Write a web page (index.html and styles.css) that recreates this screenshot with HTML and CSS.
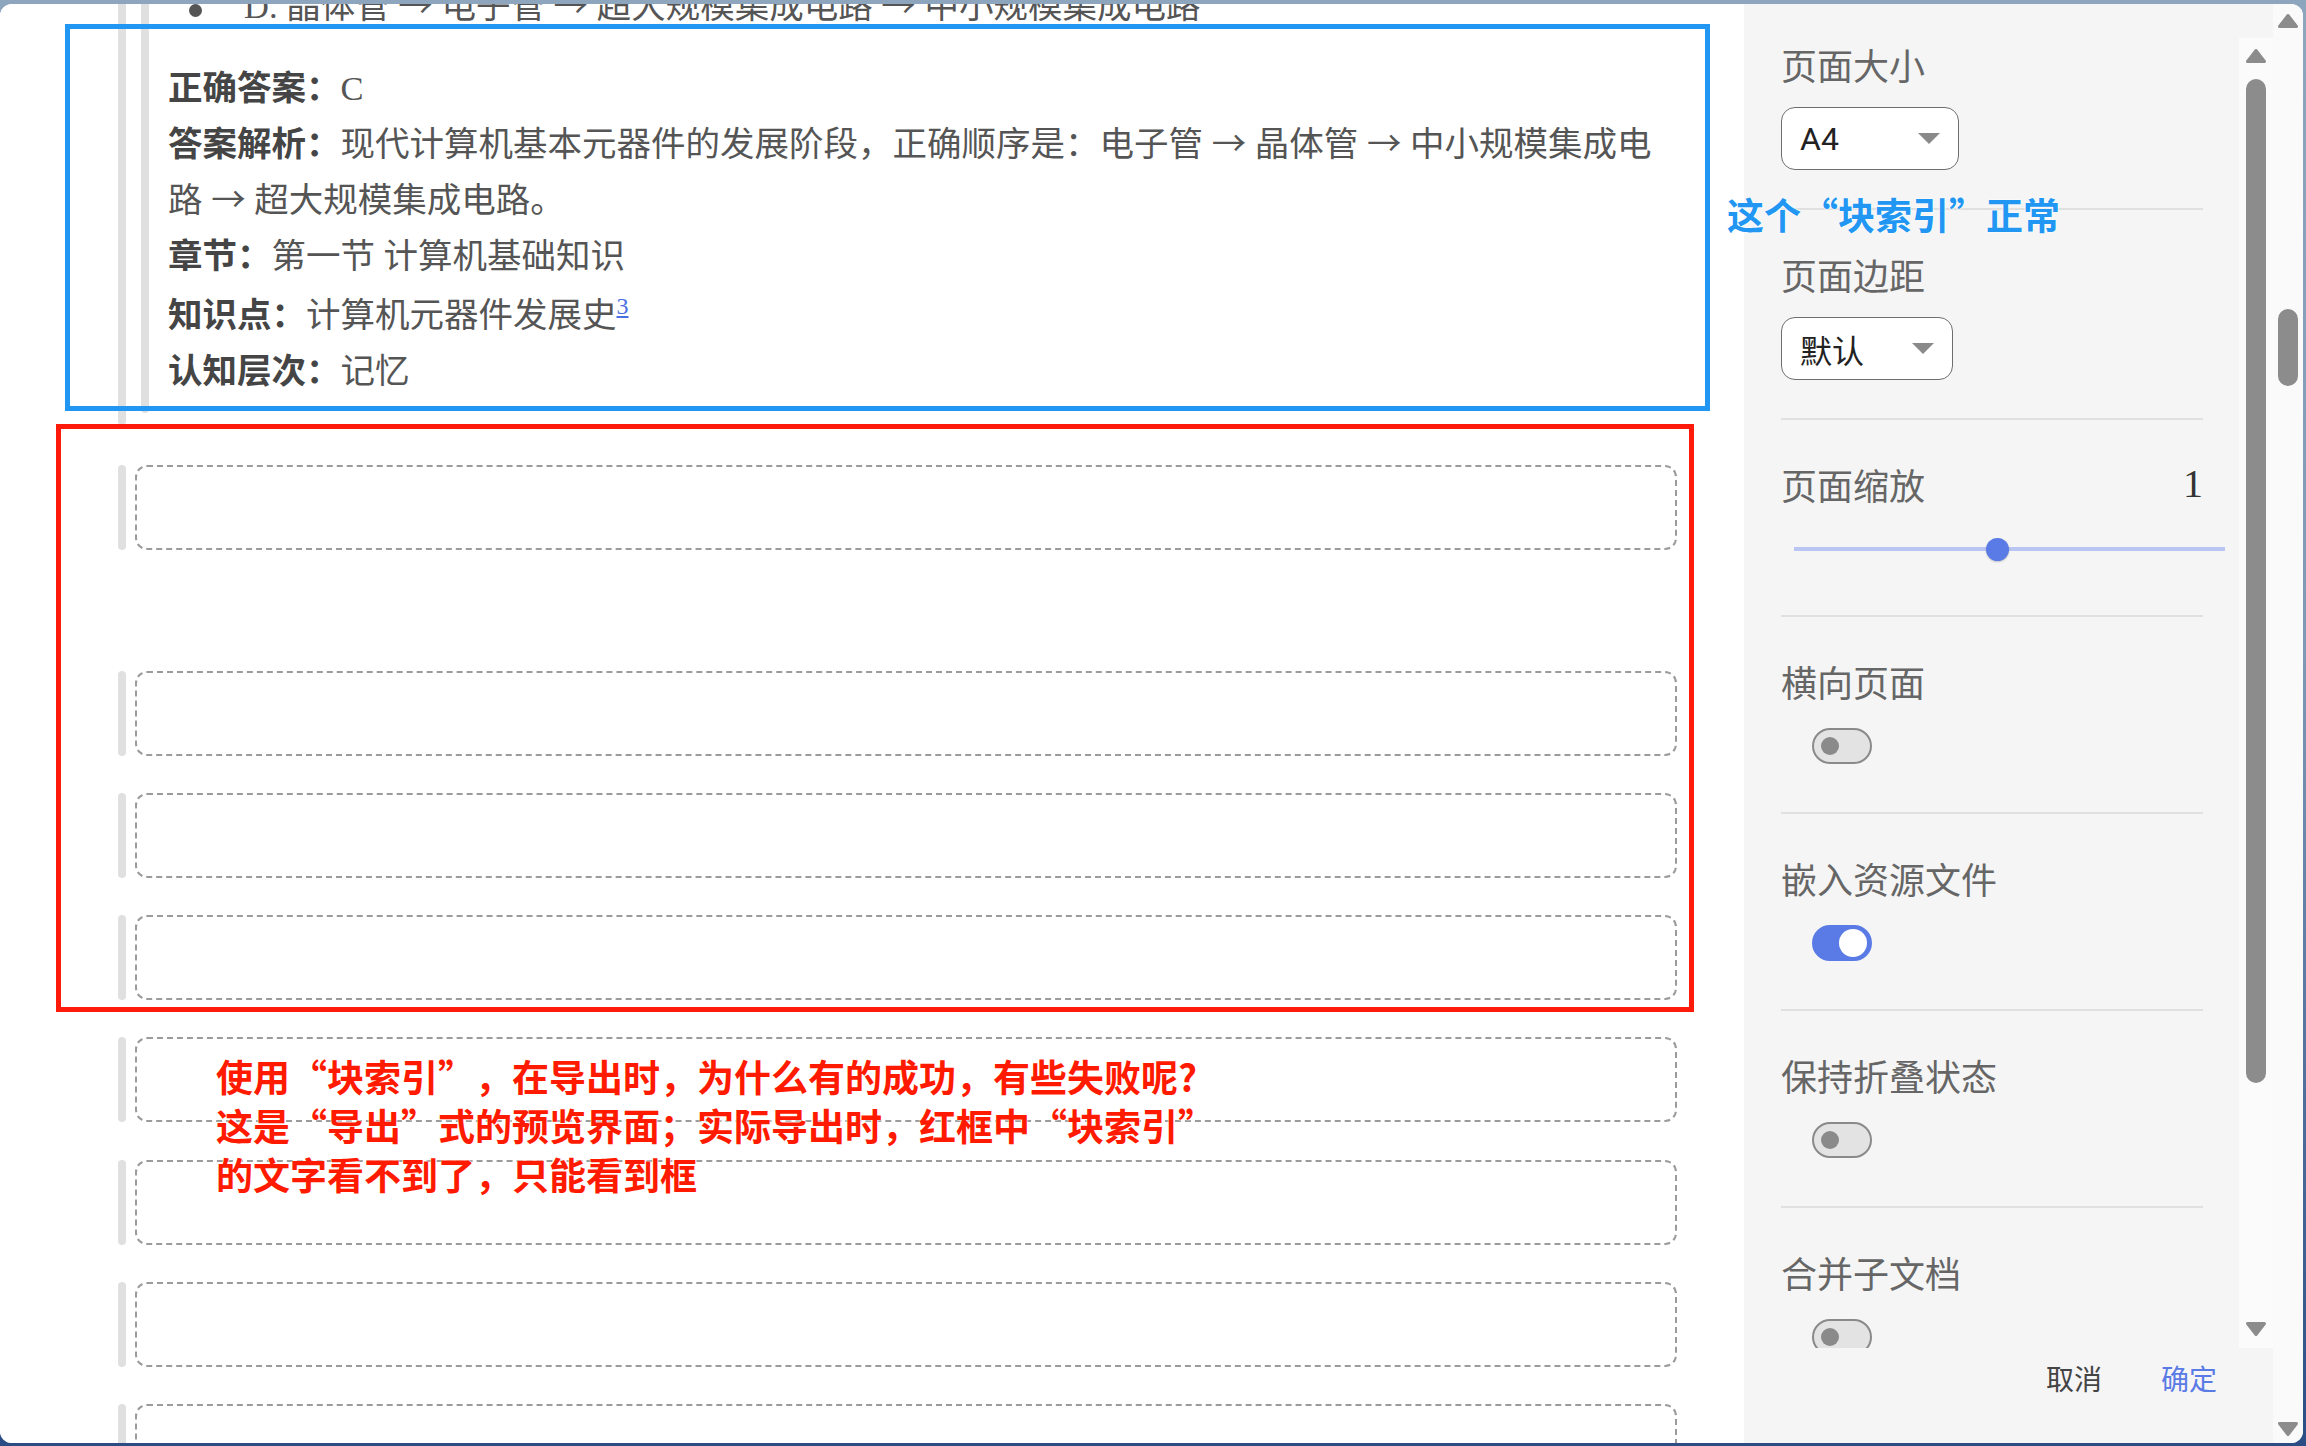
FILE: index.html
```html
<!DOCTYPE html>
<html>
<head>
  <meta charset="UTF-8">
  <meta name="viewport" content="width=device-width, initial-scale=1">
  <title>导出预览</title>
  <link rel="stylesheet" href="styles.css">
</head>
<body>
  <div class="win">
    <div class="doc">
      <div class="pg">
        <div class="qb">
          <div class="bar"></div>
          <div class="qb-in">
            <div class="bar"></div>
            <div class="qb-body">
              <ul class="ol"><li>D. 晶体管 <span class="ar">→</span> 电子管 <span class="ar">→</span> 超大规模集成电路 <span class="ar">→</span> 中小规模集成电路</li></ul>
              <div class="ans">
                <p><b>正确答案：</b>C</p>
                <p><b>答案解析：</b>现代计算机基本元器件的发展阶段，正确顺序是：电子管 <span class="ar">→</span> 晶体管 <span class="ar">→</span> 中小规模集成电路 <span class="ar">→</span> 超大规模集成电路。</p>
                <p><b>章节：</b>第一节 计算机基础知识</p>
                <p><b>知识点：</b>计算机元器件发展史<sup><a href="#fn3">3</a></sup></p>
                <p><b>认知层次：</b>记忆</p>
              </div>
            </div>
          </div>
        </div>
        <div class="blk first"><div class="bar"></div><div class="box"></div></div>
        <div class="blk"><div class="bar"></div><div class="box"></div></div>
        <div class="blk"><div class="bar"></div><div class="box"></div></div>
        <div class="blk"><div class="bar"></div><div class="box"></div></div>
        <div class="blk"><div class="bar"></div><div class="box"></div></div>
        <div class="blk"><div class="bar"></div><div class="box"></div></div>
        <div class="blk"><div class="bar"></div><div class="box"></div></div>
        <div class="blk"><div class="bar"></div><div class="box"></div></div>
      </div>
    </div>

    <div class="side">
      <div class="side-main">
        <div class="opts">
          <div class="opt sel">
            <div class="lbl">页面大小</div>
            <div class="select w-a4"><span>A4</span><i class="caret"></i></div>
          </div>
          <div class="opt sel">
            <div class="lbl">页面边距</div>
            <div class="select w-def"><span>默认</span><i class="caret"></i></div>
          </div>
          <div class="opt zoom">
            <div class="lbl row"><span>页面缩放</span><span class="val">1</span></div>
            <div class="slider">
              <div class="track"></div>
              <div class="thumb" style="left:192px"></div>
            </div>
          </div>
          <div class="opt">
            <div class="lbl">横向页面</div>
            <div class="tg"></div>
          </div>
          <div class="opt">
            <div class="lbl">嵌入资源文件</div>
            <div class="tg on"></div>
          </div>
          <div class="opt">
            <div class="lbl">保持折叠状态</div>
            <div class="tg"></div>
          </div>
          <div class="opt">
            <div class="lbl">合并子文档</div>
            <div class="tg"></div>
          </div>
        </div>
        <div class="ibar">
          <svg width="22" height="16" viewBox="0 0 22 16"><path d="M11 2.5L19.5 13.5H2.5Z" fill="#8c8c8c" stroke="#8c8c8c" stroke-width="3" stroke-linejoin="round"/></svg>
          <div class="ithumb"></div>
          <svg class="dn" width="22" height="16" viewBox="0 0 22 16"><path d="M2.5 2.5H19.5L11 13.5Z" fill="#8c8c8c" stroke="#8c8c8c" stroke-width="3" stroke-linejoin="round"/></svg>
        </div>
      </div>
      <div class="foot">
        <span>取消</span>
        <span class="ok">确定</span>
      </div>
    </div>

    <div class="obar">
      <svg width="22" height="16" viewBox="0 0 22 16"><path d="M11 2.5L19.5 13.5H2.5Z" fill="#8c8c8c" stroke="#8c8c8c" stroke-width="3" stroke-linejoin="round"/></svg>
      <div class="othumb"></div>
      <svg class="dn" width="22" height="16" viewBox="0 0 22 16"><path d="M2.5 2.5H19.5L11 13.5Z" fill="#8c8c8c" stroke="#8c8c8c" stroke-width="3" stroke-linejoin="round"/></svg>
    </div>
  </div>

  <!-- annotations drawn over the screenshot -->
  <div class="mark mark-blue"></div>
  <div class="mark mark-red"></div>
  <div class="note note-blue">这个“块索引”正常</div>
  <div class="note note-red">使用“块索引”，在导出时，为什么有的成功，有些失败呢?<br>这是“导出”式的预览界面；实际导出时，红框中“块索引”<br>的文字看不到了，只能看到框</div>
</body>
</html>
```

FILE: styles.css
```css
html,body{margin:0;}
body{width:2306px;height:1446px;overflow:hidden;position:relative;background:linear-gradient(#8ea5be 0,#7f99b6 45%,#2b4d84 100%);font-family:"Noto Sans CJK SC",sans-serif;text-spacing-trim:space-all;}
.win{margin-top:4px;width:2303px;height:1439px;border-radius:12px;overflow:hidden;display:flex;background:#fff;}

/* document preview */
.doc{width:1744px;flex:none;overflow:hidden;background:#fff;font-family:"Liberation Serif","Noto Sans CJK SC",serif;font-size:34.5px;line-height:56px;color:#555;}
.pg{margin-top:-26px;padding:0 67px 0 118px;}
.bar{width:8px;flex:none;background:#e0e0e0;border-radius:4px;}
.qb{display:flex;}
.qb-in{display:flex;flex:1;margin-left:15px;margin-bottom:12px;}
.qb-body{flex:1;margin:0 7px 0 19px;padding-bottom:14px;}
.ar{font-family:"Noto Sans CJK SC",sans-serif;line-height:1;}
.ol{list-style:none;margin:0;padding:0;}
.ol li::before{content:"";display:inline-block;width:13px;height:13px;border-radius:50%;background:#555;margin:0 42px 0 21px;vertical-align:middle;}
.ans{margin-top:26px;}
.ans p{margin:0;}
.ans b{color:#454545;}
.ans sup{font-size:24px;line-height:44px;}
.ans sup a{color:#4a6fe3;}
.blk{display:flex;gap:9px;margin-top:37.3px;}
.blk.first{margin-top:40px;margin-bottom:121px;}
.box{flex:1;height:85px;box-sizing:border-box;border:2px dashed #9b9b9b;border-radius:12px;}

/* export settings */
.side{width:529px;flex:none;background:#f5f5f5;display:flex;flex-direction:column;padding-top:34px;box-sizing:border-box;}
.side-main{display:flex;height:1310px;flex:none;}
.opts{width:495px;box-sizing:border-box;padding:0 36px 0 37px;overflow:hidden;}
.opt{border-bottom:2px solid #e0e0e0;padding:40px 0 48px;}
.opt:first-child{padding-top:2px;}
.opt.sel{padding-bottom:38px;}
.opt.zoom{padding-bottom:51px;}
.lbl{font-size:36px;line-height:48px;color:#666;}
.row{display:flex;justify-content:space-between;}
.val{font-family:"Liberation Serif",serif;font-size:40px;color:#333;}
.select{margin-top:19px;height:63px;box-sizing:border-box;border:1.5px solid #6e6e6e;border-radius:14px;background:#fff;display:flex;align-items:center;justify-content:space-between;padding:0 18px;font-family:Roboto,"Noto Sans CJK SC",sans-serif;font-size:32px;color:#222;}
.w-a4{width:178px;}
.w-def{width:172px;}
.caret{width:0;height:0;border-left:11px solid transparent;border-right:11px solid transparent;border-top:11px solid #8a8a8a;}
.slider{position:relative;height:30px;width:431px;margin:26px 0 0 13px;}
.track{position:absolute;left:0;right:0;top:13px;height:4px;background:#b9c6f3;}
.thumb{position:absolute;top:3.5px;width:23px;height:23px;border-radius:50%;background:#5a7be6;box-shadow:0 1px 2px rgba(0,0,0,.2);}
.tg{margin:23px 0 0 31px;width:60px;height:36px;box-sizing:border-box;border:2px solid #8a8a8a;border-radius:18px;background:#e3e3e3;position:relative;}
.tg::after{content:"";position:absolute;left:7px;top:7px;width:18px;height:18px;border-radius:50%;background:#8a8a8a;}
.tg.on{background:#5a7be6;border-color:#5a7be6;}
.tg.on::after{left:auto;right:3px;top:2px;width:28px;height:28px;background:#fff;}
.ibar{width:34px;flex:none;background:#fbfbfb;display:flex;flex-direction:column;align-items:center;padding:10px 0 11px;box-sizing:border-box;}
.ithumb{width:20px;height:1004px;margin-top:15px;border-radius:10px;background:#8c8c8c;}
.dn{margin-top:auto;}
.foot{flex:1;display:flex;justify-content:flex-end;gap:59px;padding:10px 56px 0 0;font-size:28px;line-height:40px;color:#444;}
.foot .ok{color:#5a7be6;}
.obar{width:30px;flex:none;background:#fafafa;display:flex;flex-direction:column;align-items:center;padding:9px 0 6px;box-sizing:border-box;}
.othumb{width:20px;height:77px;margin-top:280px;border-radius:10px;background:#8c8c8c;}

/* annotations */
.mark{position:absolute;box-sizing:border-box;}
.mark-blue{left:65px;top:24px;width:1645px;height:387px;border:5px solid #2196f3;}
.mark-red{left:56px;top:424px;width:1638px;height:588px;border:5px solid #ff1a0a;}
.note{position:absolute;font-family:"Noto Sans CJK SC",sans-serif;font-weight:700;white-space:nowrap;text-shadow:0 0 2px #fff,0 0 2px #fff;}
.note-blue{left:1727px;top:194px;font-size:37px;line-height:40px;color:#2196f3;}
.note-red{left:216px;top:1052px;font-size:37px;line-height:49px;color:#ff1a00;}
```
